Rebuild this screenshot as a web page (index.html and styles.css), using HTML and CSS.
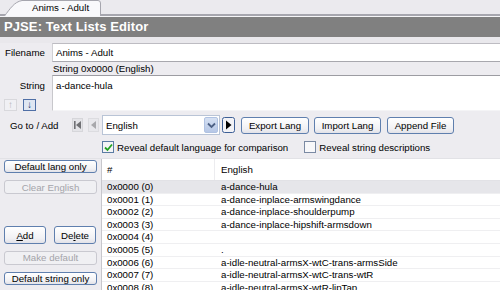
FILE: index.html
```html
<!DOCTYPE html>
<html>
<head>
<meta charset="utf-8">
<link rel="stylesheet" href="styles.css">
</head>
<body>
<div class="tabstrip">
  <div class="tab">
    <svg class="tab-shape" width="98" height="16" viewBox="0 0 98 16"><path d="M0.5 16 C6 9 10 2 18 0.5 L94 0.5 Q96.5 0.5 96.5 3 L96.5 16" fill="#f9f9fb" stroke="#a6a6ae" stroke-width="1"/></svg>
    <span class="tab-label">Anims - Adult</span>
  </div>
</div>
<div class="titlebar">PJSE: Text Lists Editor</div>
<div class="band"></div>
<div class="form">
  <div class="row-file">
    <div class="lbl">Filename</div>
    <div class="input">Anims - Adult</div>
  </div>
  <div class="row-string">
    <div class="string-side">
      <div class="lbl-string">String</div>
      <div class="arrows">
        <span class="sbtn off">↑</span>
        <span class="sbtn on">↓</span>
      </div>
    </div>
    <div class="string-main">
      <div class="caption">String 0x0000 (English)</div>
      <div class="textarea">a-dance-hula</div>
    </div>
  </div>
  <div class="row-goto">
    <div class="goto-lbl">Go to / Add</div>
    <div class="nav">
      <svg class="navbtn" width="11" height="14" viewBox="0 0 11 14"><rect x="0.5" y="0.5" width="10" height="13" fill="#e4e4e8" stroke="#d6d6da"/><rect x="2" y="3" width="1.6" height="8" fill="#707074"/><path d="M9 3 L4 7 L9 11 Z" fill="#707074"/></svg>
      <svg class="navbtn" width="11" height="14" viewBox="0 0 11 14"><rect x="0.5" y="0.5" width="10" height="13" fill="#e8e8ec" stroke="#dcdce0"/><path d="M8 3 L3 7 L8 11 Z" fill="#a8a8ac"/></svg>
    </div>
    <div class="combo">
      <span class="combo-text">English</span>
      <span class="combo-btn"><svg width="9" height="7" viewBox="0 0 9 7"><path d="M1 1.5 L4.5 5 L8 1.5" fill="none" stroke="#4d6185" stroke-width="1.8"/></svg></span>
    </div>
    <svg class="nextbtn" width="13" height="16" viewBox="0 0 13 16"><rect x="0.5" y="0.5" width="12" height="15" rx="2" fill="#f2f2f6" stroke="#3d5f96"/><path d="M4 3.5 L9.5 8 L4 12.5 Z" fill="#000"/></svg>
    <div class="btn b-export">Export Lang</div>
    <div class="btn b-import">Import Lang</div>
    <div class="btn b-append">Append File</div>
  </div>
  <div class="row-checks">
    <span class="chk checked"><svg width="9" height="9" viewBox="0 0 9 9"><path d="M1 4.5 L3.5 7 L8 1.5" fill="none" stroke="#21a121" stroke-width="1.8"/></svg></span>
    <span class="chk-lbl">Reveal default language for comparison</span>
    <span class="chk chk2"></span>
    <span class="chk-lbl">Reveal string descriptions</span>
  </div>
  <div class="row-main">
    <div class="side">
      <div class="btn wide">Default lang only</div>
      <div class="btn wide dis">Clear English</div>
      <div class="pair">
        <div class="btn half"><u>A</u>dd</div>
        <div class="btn half">De<u>l</u>ete</div>
      </div>
      <div class="btn wide dis">Make default</div>
      <div class="btn wide">Default string only</div>
    </div>
    <div class="list">
      <div class="lrow head"><span class="c1">#</span><span class="c2">English</span></div>
      <div class="lrow sel"><span class="c1">0x0000 (0)</span><span class="c2">a-dance-hula</span></div>
      <div class="lrow"><span class="c1">0x0001 (1)</span><span class="c2">a-dance-inplace-armswingdance</span></div>
      <div class="lrow"><span class="c1">0x0002 (2)</span><span class="c2">a-dance-inplace-shoulderpump</span></div>
      <div class="lrow"><span class="c1">0x0003 (3)</span><span class="c2">a-dance-inplace-hipshift-armsdown</span></div>
      <div class="lrow"><span class="c1">0x0004 (4)</span><span class="c2"></span></div>
      <div class="lrow"><span class="c1">0x0005 (5)</span><span class="c2">.</span></div>
      <div class="lrow"><span class="c1">0x0006 (6)</span><span class="c2">a-idle-neutral-armsX-wtC-trans-armsSide</span></div>
      <div class="lrow"><span class="c1">0x0007 (7)</span><span class="c2">a-idle-neutral-armsX-wtC-trans-wtR</span></div>
      <div class="lrow"><span class="c1">0x0008 (8)</span><span class="c2">a-idle-neutral-armsX-wtR-lipTap</span></div>
    </div>
  </div>
</div>
</body>
</html>
```
FILE: styles.css
```css
* { box-sizing: border-box; }
html, body { margin: 0; padding: 0; }
body {
  width: 500px;
  height: 290px;
  overflow: hidden;
  background: #edecf0;
  font-family: "Liberation Sans", Arial, sans-serif;
  font-size: 9.7px;
  color: #000;
}
.tabstrip {
  height: 17px;
  background: #ebeaee;
  border-bottom: 1px solid #f6f6f8;
  box-shadow: inset 0 -3px 0 -1px #a6a6ae;
  padding-left: 4px;
  display: flex;
  align-items: flex-end;
}
.tab {
  position: relative;
  width: 98px;
  height: 16px;
}
.tab-shape { position: absolute; left: 0; top: 0; }
.tab-label {
  position: absolute;
  left: 28px;
  top: 2px;
  font-size: 9.7px;
}
.titlebar {
  height: 20px;
  background: #808080;
  color: #fff;
  font-weight: bold;
  font-size: 13px;
  line-height: 20px;
  padding-left: 4px;
  letter-spacing: 0.1px;
}
.band {
  height: 6px;
  background: #e9e8ec;
}
.form { background: #edecf0; }
.row-file {
  display: flex;
  height: 19px;
}
.lbl {
  width: 52px;
  padding-left: 5px;
  line-height: 19px;
}
.input {
  flex: 1;
  background: #fff;
  border-top: 1px solid #bdbcc2;
  border-bottom: 1px solid #a8a8ae;
  border-left: 1px solid #d0d0d4;
  padding-left: 3px;
  line-height: 17px;
}
.row-string {
  display: flex;
  height: 49px;
}
.string-side {
  width: 52px;
  display: flex;
  flex-direction: column;
  align-items: flex-end;
  padding-top: 18px;
}
.lbl-string { padding-right: 7px; line-height: 12px; }
.arrows {
  align-self: flex-start;
  display: flex;
  gap: 6px;
  padding-left: 4px;
  margin-top: 7px;
}
.sbtn {
  width: 13px;
  height: 12px;
  font-size: 10px;
  line-height: 10px;
  text-align: center;
  border: 1px solid #d8d8dc;
  background: #f0f0f4;
  color: #b4b4b8;
}
.sbtn.on {
  border-color: #4f6fa6;
  background: #dfe6f2;
  color: #223a6a;
  font-weight: bold;
}
.string-main { flex: 1; display: flex; flex-direction: column; }
.caption {
  height: 13px;
  line-height: 14px;
  padding-left: 1px;
}
.textarea {
  flex: 1;
  background: #fff;
  border-top: 1px solid #9c9ca2;
  border-left: 1px solid #c8c8cc;
  border-bottom: 1px solid #f4f4f6;
  padding: 4px 3px;
  line-height: 12px;
}
.row-goto {
  display: flex;
  align-items: center;
  height: 28px;
  padding-left: 10px;
}
.goto-lbl { width: 62px; }
.nav { display: flex; gap: 5px; }
.combo {
  margin-left: 3px;
  width: 118px;
  height: 20px;
  background: #fff;
  border: 1px solid #b9c4d6;
  display: flex;
  align-items: center;
  justify-content: space-between;
  padding: 1px 1px 1px 3px;
}
.combo-btn {
  width: 14px;
  height: 16px;
  border-radius: 2px;
  background: linear-gradient(#d6e1f3, #b6c7e6);
  border: 1px solid #b0c2e2;
  display: flex;
  align-items: center;
  justify-content: center;
}
.nextbtn { margin-left: 2px; }
.btn {
  height: 17px;
  border: 1px solid #5f7fae;
  border-radius: 3px;
  background: linear-gradient(#ffffff, #f1f1f4 70%, #e2e2e8);
  display: flex;
  align-items: center;
  justify-content: center;
  white-space: nowrap;
}
.b-export { margin-left: 6px; width: 68px; }
.b-import { margin-left: 5px; width: 67px; }
.b-append { margin-left: 6px; width: 67px; }
.row-checks {
  display: flex;
  align-items: center;
  height: 19px;
  padding-left: 102px;
  padding-bottom: 3px;
}
.chk {
  width: 12px;
  height: 12px;
  border: 1px solid #5b7ca3;
  background: #f4f4f6;
  display: flex;
  align-items: center;
  justify-content: center;
}
.chk-lbl { margin-left: 3px; }
.chk2 { margin-left: 16px; border-color: #7b8aa3; background: #f8f8fa; }
.row-main {
  display: flex;
  height: 134px;
  border-top: 1px solid #e2e2e6;
}
.side {
  width: 101px;
  padding: 1px 0 0 4px;
  display: flex;
  flex-direction: column;
}
.btn.wide { width: 93px; height: 17px; margin-bottom: 7px; }
.btn.dis {
  border-color: #c9c9d0;
  background: #f0f0f3;
  color: #a4a4aa;
  height: 18px;
}
.pair {
  display: flex;
  gap: 8px;
  margin-top: 25px;
  margin-bottom: 7px;
}
.btn.half { width: 42px; height: 18px; }
.list {
  flex: 1;
  background: #fff;
  border-left: 1px solid #c7c7cc;
  overflow: hidden;
}
.lrow {
  display: flex;
  height: 12.6px;
  line-height: 12px;
  border-bottom: 1px solid #efeff1;
}
.lrow.head {
  height: 22px;
  line-height: 21px;
  border-bottom: 1px solid #e2e2e6;
}
.lrow.sel { background: #e6e6ea; }
.c1 { width: 113px; padding-left: 5px; }
.head .c1 { border-right: 1px solid #ececef; }
.c2 { padding-left: 6px; white-space: nowrap; }
```
